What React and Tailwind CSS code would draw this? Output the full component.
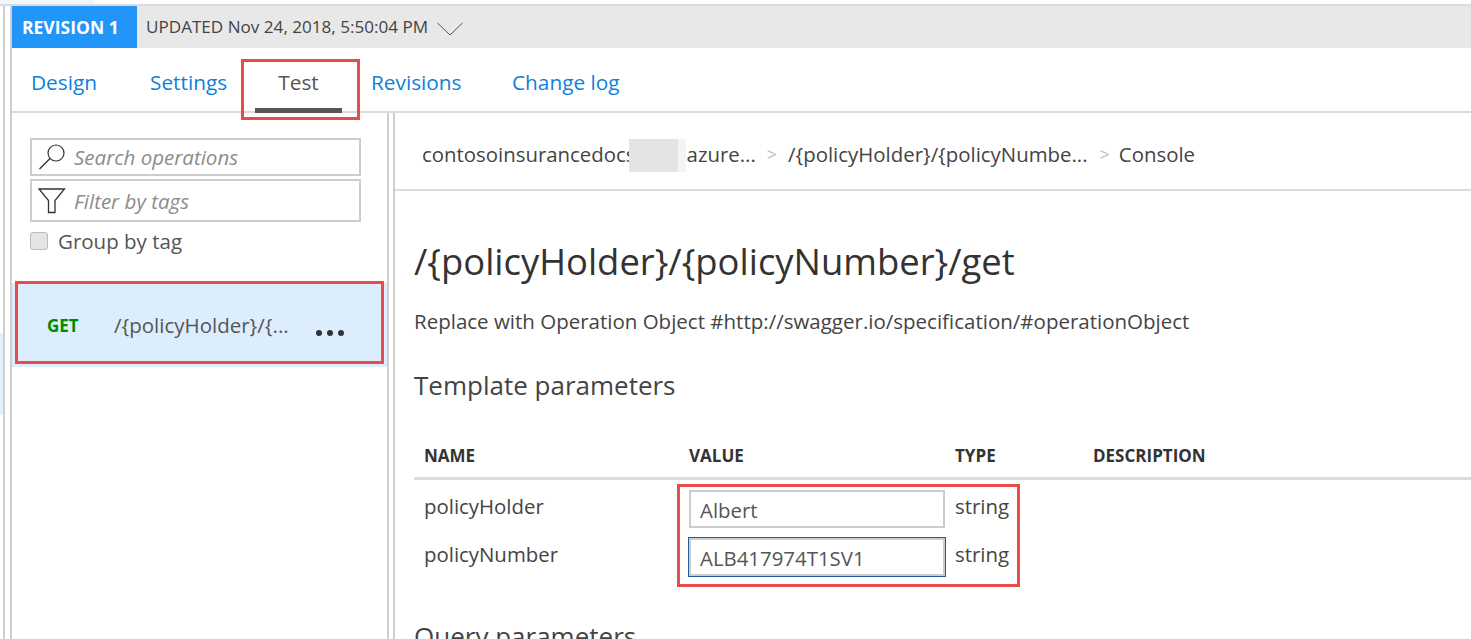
import React from "react";

const FONT = { fontFamily: '"Open Sans", "Noto Sans", sans-serif' };

const SearchIcon = () => (
  <svg width="28" height="28" viewBox="0 0 28 28" fill="none" stroke="#333" strokeWidth="1.2">
    <circle cx="18" cy="10" r="8" />
    <path d="M12 15.5 L1.5 26" strokeWidth="1.5" />
  </svg>
);

const FilterIcon = () => (
  <svg width="28" height="26" viewBox="0 0 28 26" fill="none" stroke="#333" strokeWidth="1.3">
    <path d="M1 1 H26.5 L17 12.5 V24.5 H10.5 V12.5 Z" />
  </svg>
);

const Chevron = () => (
  <svg width="26" height="14" viewBox="0 0 26 14" fill="none" stroke="#555" strokeWidth="1">
    <path d="M0.5 1 L13 13 L25.5 1" />
  </svg>
);

const RedBox = ({ className }) => (
  <div className={"absolute border-[3px] border-[#e84c4a] pointer-events-none " + className} />
);

const Sep = ({ spacing }) => (
  <span className={"text-[#bbb] text-[18px] " + spacing}>&gt;</span>
);

export default function App() {
  return (
    <div className="relative w-[1471px] h-[639px] overflow-hidden bg-white text-[#444]" style={FONT}>
      <div className="h-[4px] w-[95px] bg-[#eef6fe]" />
      <div className="flex h-[635px] border-t-2 border-[#dcdcdc]">
        {/* left gutter */}
        <div className="w-[12px] shrink-0 flex">
          <div className="w-[3px] flex flex-col">
            <div className="h-[327px]" />
            <div className="h-[82px] bg-[#e3f1fd]" />
          </div>
          <div className="w-[2px] bg-[#cfcfcf]" />
          <div className="w-[5px]" />
          <div className="w-[2px] bg-[#cfcfcf]" />
        </div>

        <div className="flex-1 flex flex-col min-w-0">
          {/* revision bar */}
          <div className="flex items-center h-[42px] bg-[#e8e8e8] shrink-0">
            <div className="w-[125px] h-full bg-[#2196f8] text-white font-bold text-[17.5px] flex items-center pl-[10px] whitespace-nowrap">
              REVISION 1
            </div>
            <span className="ml-[9px] text-[17.1px] text-[#444] whitespace-nowrap">UPDATED Nov 24, 2018, 5:50:04 PM</span>
            <span className="ml-[9px] mt-[3px]"><Chevron /></span>
          </div>

          {/* tabs */}
          <div className="flex h-[65px] shrink-0 border-b-2 border-[#dcdcdc] pl-[19px] text-[20.8px] pt-[19px]">
            <div className="w-[119px] text-[#0f7fdb]">Design</div>
            <div className="w-[105px] text-[#0f7fdb]">Settings</div>
            <div className="relative w-[87px] mr-[29px] text-center text-[#555]">
              Test
              <div className="absolute left-0 right-0 bottom-[-2px] h-[5px] bg-[#555]" />
            </div>
            <div className="w-[141px] text-[#0f7fdb]">Revisions</div>
            <div className="text-[#0f7fdb]">Change log</div>
          </div>

          <div className="flex flex-1 min-h-0">
            {/* sidebar */}
            <div className="w-[375px] shrink-0 pt-[25px]">
              <div className="mx-[18px] w-[331px] h-[38px] border-2 border-[#cdcdcd] flex items-center pl-[6px]">
                <SearchIcon />
                <span className="ml-[8px] italic text-[#8c8c8c] text-[20.5px]">Search operations</span>
              </div>
              <div className="mx-[18px] mt-[3px] w-[331px] h-[43px] border-2 border-[#cdcdcd] flex items-center pl-[6px]">
                <FilterIcon />
                <span className="ml-[8px] mt-[2px] italic text-[#8c8c8c] text-[20.5px]">Filter by tags</span>
              </div>
              <div className="mx-[18px] mt-[4px] flex items-center">
                <div className="w-[18px] h-[18px] rounded-[3px] bg-[#e4e4e4] border border-[#bcbcbc]" />
                <span className="ml-[10px] text-[20.5px] text-[#555]">Group by tag</span>
              </div>
              <div className="mt-[26px] h-[84px] bg-[#dceefd] flex items-center pl-[35px] pt-[2px]">
                <span className="w-[67px] text-[#008a00] font-bold text-[17px]">GET</span>
                <span className="text-[#555] text-[20.5px] w-[202px] whitespace-nowrap">/{"{"}policyHolder{"}"}/{"{"}...</span>
                <span className="flex gap-[5px] mt-[14px]">
                  <i className="block w-[6px] h-[6px] rounded-full bg-[#333]" />
                  <i className="block w-[6px] h-[6px] rounded-full bg-[#333]" />
                  <i className="block w-[6px] h-[6px] rounded-full bg-[#333]" />
                </span>
              </div>
            </div>

            {/* double divider */}
            <div className="w-[8px] shrink-0 border-x-2 border-[#cfcfcf]" />

            {/* main */}
            <div className="flex-1 min-w-0">
              <div className="h-[78px] border-b-2 border-[#dcdcdc] flex items-center pl-[27px] pt-[6px] text-[20.4px] text-[#444]">
                <span className="relative whitespace-nowrap">
                  contosoinsurancedocs<span className="inline-block w-[51px]" />azure...
                  <span className="absolute left-[207px] top-[0px] w-[49px] h-[33px] bg-[#e4e4e4]" />
                  <span className="absolute left-[256px] top-[0px] w-[8px] h-[33px] bg-[#f4f4f4]" />
                </span>
                <Sep spacing="ml-[11px] mr-[11px]" />
                <span className="whitespace-nowrap">/{"{"}policyHolder{"}"}/{"{"}policyNumbe...</span>
                <Sep spacing="ml-[12px] mr-[9px]" />
                <span>Console</span>
              </div>

              <div className="pl-[19px]">
                <h1 className="mt-[47px] text-[36.4px] leading-[46px] text-[#333] whitespace-nowrap">/{"{"}policyHolder{"}"}/{"{"}policyNumber{"}"}/get</h1>
                <p className="mt-[22px] text-[20.5px] leading-[30px] text-[#444] whitespace-nowrap">
                  Replace with Operation Object #http://swagger.io/specification/#operationObject
                </p>
                <h2 className="mt-[31px] text-[26px] leading-[36px] text-[#444]">Template parameters</h2>

                <div className="mt-[39px] flex h-[38px] border-b-[3px] border-[#dcdcdc] text-[17px] leading-[26px] font-bold text-[#333] pt-[1px]">
                  <span className="w-[275px] pl-[10px]">NAME</span>
                  <span className="w-[266px]">VALUE</span>
                  <span className="w-[138px]">TYPE</span>
                  <span>DESCRIPTION</span>
                </div>

                {[
                  ["policyHolder", "Albert", false],
                  ["policyNumber", "ALB417974T1SV1", true],
                ].map(([name, value, focused]) => (
                  <div key={name} className="flex h-[48px] text-[20.4px] leading-[30px]">
                    <span className="w-[275px] pl-[10px] pt-[11px]">{name}</span>
                    <div className="w-[266px] pt-[10px]">
                      <div
                        className={
                          "w-[256px] h-[38px] border-2 border-[#cdcdcd] pl-[9px] pt-[3px] text-[#555] " +
                          (focused ? "outline outline-1 outline-[#1f5f9f]" : "")
                        }
                      >
                        {value}
                      </div>
                    </div>
                    <span className="pt-[11px]">string</span>
                  </div>
                ))}

                <h2 className="mt-[42px] text-[26px] leading-[36px] text-[#444] whitespace-nowrap">Query parameters</h2>
              </div>
            </div>
          </div>
        </div>
      </div>

      <RedBox className="left-[241px] top-[59px] w-[119px] h-[61px]" />
      <RedBox className="left-[15px] top-[281px] w-[369px] h-[83px]" />
      <RedBox className="left-[677px] top-[484px] w-[343px] h-[103px]" />
    </div>
  );
}
